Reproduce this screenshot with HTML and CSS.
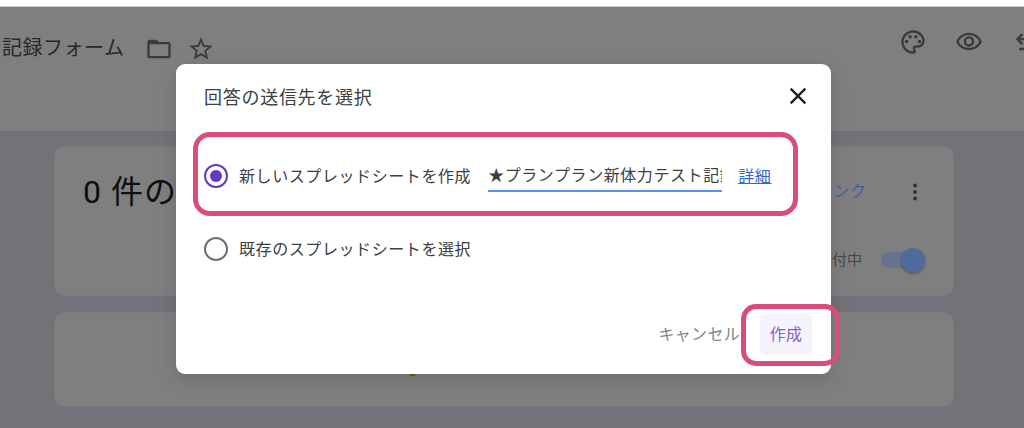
FILE: index.html
```html
<!DOCTYPE html>
<html lang="ja">
<head>
<meta charset="utf-8">
<title>回答の送信先を選択</title>
<link rel="stylesheet" href="styles.css">
</head>
<body>
<div class="page">
  <div class="top-strip"></div>
  <header class="form-header">
    <h1 class="form-title">記録フォーム</h1>
    <svg class="icon folder" viewBox="0 0 24 24"><path d="M20 6h-8l-2-2H4c-1.1 0-1.99.9-1.99 2L2 18c0 1.1.9 2 2 2h16c1.1 0 2-.9 2-2V8c0-1.1-.9-2-2-2zm0 12H4V8h16v10z"/></svg>
    <svg class="icon star" viewBox="0 0 24 24"><path d="M22 9.24l-7.19-.62L12 2 9.19 8.63 2 9.24l5.46 4.73L5.82 21 12 17.27 18.18 21l-1.63-7.03L22 9.24zM12 15.4l-3.76 2.27 1-4.28-3.32-2.88 4.38-.38L12 6.1l1.71 4.04 4.38.38-3.32 2.88 1 4.28L12 15.4z"/></svg>
    <div class="header-actions">
      <svg class="icon" viewBox="0 0 24 24"><path d="M12 22C6.49 22 2 17.51 2 12S6.49 2 12 2s10 4.04 10 9c0 3.31-2.69 6-6 6h-1.77c-.28 0-.5.22-.5.5 0 .12.05.23.13.33.41.47.64 1.06.64 1.67A2.5 2.5 0 0 1 12 22zm0-18c-4.41 0-8 3.59-8 8s3.59 8 8 8c.28 0 .5-.22.5-.5a.54.54 0 0 0-.14-.35c-.41-.46-.63-1.05-.63-1.65a2.5 2.5 0 0 1 2.5-2.5H16c2.21 0 4-1.79 4-4 0-3.86-3.59-7-8-7z"/><circle cx="6.5" cy="11.5" r="1.5"/><circle cx="9.5" cy="7.5" r="1.5"/><circle cx="14.5" cy="7.5" r="1.5"/><circle cx="17.5" cy="11.5" r="1.5"/></svg>
      <svg class="icon" viewBox="0 0 24 24"><path d="M12 6c3.79 0 7.17 2.13 8.82 5.5C19.17 14.87 15.79 17 12 17s-7.17-2.13-8.82-5.5C4.83 8.13 8.21 6 12 6m0-2C7 4 2.73 7.11 1 11.5 2.73 15.89 7 19 12 19s9.27-3.11 11-7.5C21.27 7.11 17 4 12 4zm0 5c1.38 0 2.5 1.12 2.5 2.5S13.38 14 12 14s-2.5-1.12-2.5-2.5S10.62 9 12 9m0-2c-2.48 0-4.5 2.02-4.5 4.5S9.52 16 12 16s4.5-2.02 4.5-4.5S14.48 7 12 7z"/></svg>
      <svg class="icon" viewBox="0 0 24 24"><path d="M4 9.5 9 4.5l1.4 1.4L7.8 8.5H22v2H7.8l2.6 2.6L9 14.5zM7 17h16v2H7z"/></svg>
    </div>
  </header>
  <main class="content">
    <section class="card card-summary">
      <div class="card-top">
        <h2 class="count">0 件の回答</h2>
        <a class="sheet-link">スプレッドシートにリンク</a>
        <svg class="icon kebab" viewBox="0 0 24 24"><circle cx="12" cy="5.5" r="2"/><circle cx="12" cy="12" r="2"/><circle cx="12" cy="18.5" r="2"/></svg>
      </div>
      <div class="card-bottom">
        <span class="accepting">回答を受付中</span>
        <span class="toggle"><span class="toggle-knob"></span></span>
      </div>
    </section>
    <section class="card card-empty"><span class="illustration"></span></section>
  </main>
  <div class="scrim">
    <div class="dialog">
      <div class="dialog-head">
        <h3 class="dialog-title">回答の送信先を選択</h3>
        <svg class="close" viewBox="0 0 24 24"><path d="M19 6.41 17.59 5 12 10.59 6.41 5 5 6.41 10.59 12 5 17.59 6.41 19 12 13.41 17.59 19 19 17.59 13.41 12z"/></svg>
      </div>
      <div class="option option-new">
        <span class="radio radio-on"></span>
        <span class="option-label">新しいスプレッドシートを作成</span>
        <span class="sheet-name">★プランプラン新体力テスト記録</span>
        <a class="details">詳細</a>
      </div>
      <div class="option option-existing">
        <span class="radio"></span>
        <span class="option-label">既存のスプレッドシートを選択</span>
      </div>
      <div class="dialog-actions">
        <button class="btn btn-cancel">キャンセル</button>
        <button class="btn btn-create">作成</button>
      </div>
    </div>
  </div>
  <div class="callout callout-option"></div>
  <div class="callout callout-create"></div>
</div>
</body>
</html>
```
FILE: styles.css
```css
* { box-sizing: border-box; }
html, body { margin: 0; padding: 0; }
body {
  width: 1024px;
  height: 428px;
  overflow: hidden;
  font-family: "Roboto", "Noto Sans CJK JP", sans-serif;
  background: #fff;
}
.page {
  position: relative;
  width: 1024px;
  height: 428px;
  overflow: hidden;
  background: #e8e4f0;
}
.top-strip { height: 7px; background: #fff; border-bottom: 1px solid #ccc; }
.form-header {
  height: 124px;
  background: #fff;
  display: flex;
  align-items: flex-start;
  padding: 21px 0 0 2px;
  overflow: hidden;
}
.form-title {
  margin: 6px 0 0;
  font-size: 20px;
  font-weight: 400;
  line-height: 28px;
  color: #505050;
  letter-spacing: 0.5px;
  white-space: nowrap;
}
.icon { width: 28px; height: 28px; flex: none; fill: #747474; display: block; }
.folder { margin: 7px 0 0 21px; }
.star { margin: 7px 0 0 14px; }
.header-actions {
  margin-left: auto;
  margin-right: -15px;
  display: flex;
  gap: 28px;
  flex: none;
}
.content {
  padding: 15px 70px 0 54px;
  display: flex;
  flex-direction: column;
  gap: 16px;
}
.card {
  background: #fff;
  border: 1px solid #f4f4f4;
  border-radius: 10px;
}
.card-summary { height: 150px; padding: 23px 28px 0 28px; }
.card-top { display: flex; align-items: center; height: 44px; }
.count {
  margin: 0 0 6px;
  font-size: 32px;
  font-weight: 400;
  color: #202124;
  letter-spacing: 1px;
  white-space: nowrap;
}
.sheet-link {
  position: relative;
  z-index: 1;
  margin: 0 0 4px auto;
  font-size: 16px;
  letter-spacing: .2px;
  color: #3f5fa5;
  white-space: nowrap;
}
.kebab { width: 24px; height: 24px; margin-left: 37px; margin-right: -2px; fill: #666; }
.card-bottom { display: flex; align-items: center; justify-content: flex-end; margin-top: 34px; }
.accepting { font-size: 15px; color: #909090; margin: 0 19px 3px 0; }
.toggle {
  display: block;
  position: relative;
  z-index: 1;
  width: 34px;
  height: 16px;
  margin-right: 10px;
  border-radius: 8px;
  background: #66738f;
}
.toggle-knob {
  position: absolute;
  right: -10px;
  top: -4px;
  width: 24px;
  height: 24px;
  border-radius: 50%;
  background: #516a9c;
  box-shadow: 0 2px 3px rgba(0,0,0,.3);
}
.card-empty { height: 95px; position: relative; }
.illustration {
  position: absolute;
  left: 355px;
  top: 60px;
  width: 5px;
  height: 3px;
  background: #f0a93c;
}
.scrim {
  position: absolute;
  inset: 7px 0 0;
  background: rgba(0,0,0,.5);
  padding: 57px 0 0 176px;
}
.dialog {
  position: relative;
  z-index: 2;
  width: 655px;
  height: 310px;
  background: #fff;
  border-radius: 9px;
  box-shadow: 0 6px 20px rgba(0,0,0,.15);
  display: flex;
  flex-direction: column;
  padding: 0 0 19px 28px;
}
.dialog-head { display: flex; align-items: center; height: 64px; padding-right: 19px; }
.dialog-title {
  margin: 0;
  font-size: 18px;
  font-weight: 400;
  letter-spacing: .72px;
  color: #3c4043;
  white-space: nowrap;
}
.close { margin-left: auto; width: 28px; height: 28px; fill: #202124; }
.option { display: flex; align-items: center; height: 30px; color: #3c4043; }
.option-new { margin-top: 33px; }
.option-existing { margin-top: 43px; }
.radio {
  width: 24px;
  height: 24px;
  flex: none;
  border-radius: 50%;
  border: 2px solid #6f7074;
  background: #fff;
}
.radio-on {
  border-color: #673ab7;
  background: #673ab7;
  background-clip: content-box;
  padding: 4px;
}
.option-label {
  margin: -2px 0 0 11px;
  font-size: 16px;
  letter-spacing: .58px;
  white-space: nowrap;
}
.sheet-name {
  display: block;
  flex: none;
  margin-left: 17px;
  width: 234px;
  height: 31px;
  overflow: hidden;
  border-bottom: 2px solid #5d8fef;
  align-self: flex-start;
  line-height: 29px;
  font-size: 16px;
  color: #3c4043;
  white-space: nowrap;
  letter-spacing: .58px;
}
.details {
  margin: -2px 0 0 16px;
  font-size: 16px;
  color: #2f66d0;
  text-decoration: underline;
  letter-spacing: .7px;
}
.dialog-actions {
  margin-top: auto;
  display: flex;
  align-items: center;
  justify-content: flex-end;
  gap: 20px;
  padding-right: 19px;
}
.btn {
  border: 0;
  background: none;
  font-family: inherit;
  font-size: 16px;
  letter-spacing: .3px;
  padding: 0 0 3px;
  height: 41px;
  border-radius: 5px;
  color: #80868b;
}
.btn-create { width: 52px; background: #f6f3fc; color: #8064c8; }
.callout {
  position: absolute;
  z-index: 3;
  border: 5.5px solid #d94c7c;
  pointer-events: none;
}
.callout-option { left: 193px; top: 132px; width: 605px; height: 84px; border-radius: 17px; }
.callout-create { left: 741px; top: 304px; width: 99px; height: 62px; border-radius: 15px; }
```
